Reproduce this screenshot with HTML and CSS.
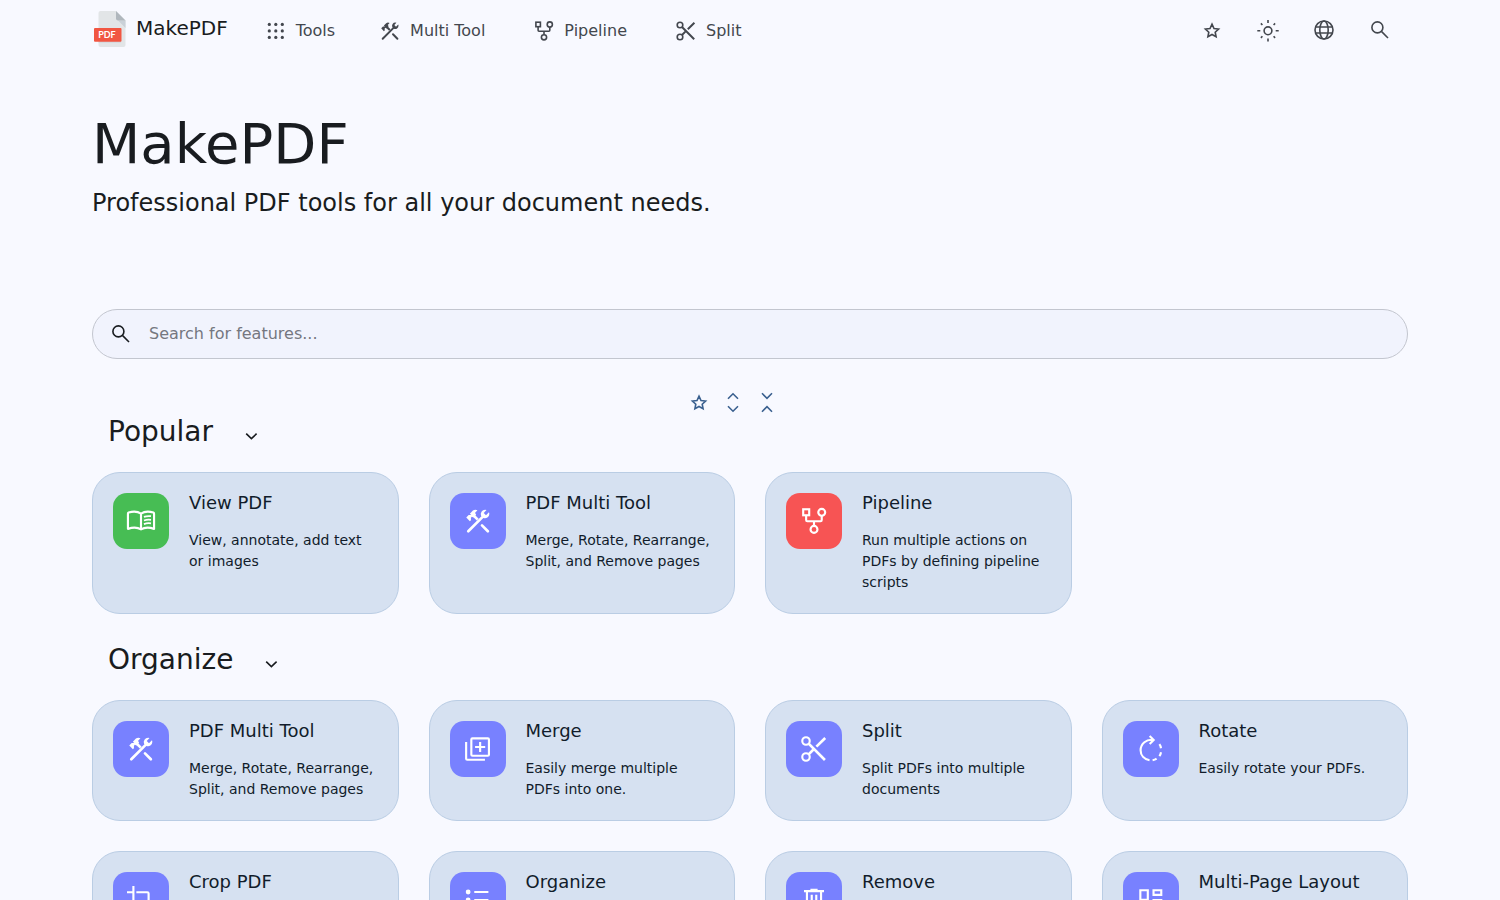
FILE: index.html
```html
<!DOCTYPE html>
<html lang="en">
<head>
<meta charset="utf-8">
<meta name="viewport" content="width=device-width, initial-scale=1">
<title>MakePDF</title>
<link rel="stylesheet" href="styles.css">
</head>
<body>
<svg class="sprite" aria-hidden="true">
  <symbol id="apps" viewBox="0 0 24 24"><g fill="currentColor"><circle cx="5.3" cy="5.4" r="1.6"/><circle cx="11.8" cy="5.4" r="1.6"/><circle cx="18.3" cy="5.4" r="1.6"/><circle cx="5.3" cy="11.9" r="1.6"/><circle cx="11.8" cy="11.9" r="1.6"/><circle cx="18.3" cy="11.9" r="1.6"/><circle cx="5.3" cy="18.4" r="1.6"/><circle cx="11.8" cy="18.4" r="1.6"/><circle cx="18.3" cy="18.4" r="1.6"/></g></symbol>
  <symbol id="tools" viewBox="0 0 24 24"><g fill="none" stroke="currentColor" stroke-width="2" stroke-linecap="round"><path d="M4.700 19.700 15.500 8.900M15 15.300l4.400 4.400"/><path stroke-linecap="butt" d="M8.500 7.700l3.300 3.300"/></g><path fill="currentColor" d="M3.200 9.300 5 7.500h1.900L5.900 6.500 8.200 4.200Q9.800 3 11.600 4L9.700 6l.9 1-.5.900L8.600 9.400 7.400 8.800 6.700 9.500v1.900l-.8.800ZM17.300 3.600q.6 0 1.100.2L16.300 6l1.700 1.700 2.200-2.200q.3.600.3 1.300a3.200 3.200 0 0 1-4.500 2.900L14.300 8A3.200 3.200 0 0 1 17.300 3.600Z"/></symbol>
  <symbol id="pipeline" viewBox="0 0 24 24"><g fill="none" stroke="currentColor" stroke-width="1.6"><rect x="3.9" y="3.2" width="4.5" height="4.5"/><circle cx="17.8" cy="5.5" r="2.6"/><circle cx="12" cy="18.3" r="2.6"/><path d="M6.1 7.9v3.4q0 .9.9.9h9.900q.9 0 .9-.9V8.200M12 12.200v3.400"/></g></symbol>
  <symbol id="cut" viewBox="0 0 24 24"><g fill="none" stroke="currentColor" stroke-width="1.6"><circle cx="6" cy="6" r="2.8"/><circle cx="6" cy="18" r="2.8"/><path stroke-width="2" d="M8 8l12.200 12.200M8 16l3.600-3.600M13.800 10.200 20.400 3.800"/></g></symbol>
  <symbol id="star" viewBox="0 0 24 24"><path fill="none" stroke="currentColor" stroke-width="1.6" d="m12 6.200 2 4.300 4.600.5-3.400 3.200.9 4.600-4.100-2.300-4.100 2.300.9-4.600L5.400 11l4.600-.5Z"/></symbol>
  <symbol id="sun" viewBox="0 0 24 24"><g fill="none" stroke="currentColor" stroke-width="1.600"><circle cx="12" cy="12.800" r="3.900"/><path d="M12 2.100v3M12 20.500v3M1.300 12.800h3M19.700 12.800h3M4.900 5.400l1.500 1.600M17.600 18.300l1.500 1.600M19.100 5.400l-1.500 1.600M6.400 18.300l-1.500 1.600"/></g></symbol>
  <symbol id="globe" viewBox="0 0 24 24"><g fill="none" stroke="currentColor" stroke-width="1.600"><circle cx="12" cy="12" r="9"/><ellipse cx="12" cy="12" rx="4.200" ry="9"/><path d="M3.600 9h16.800M3.600 15h16.800"/></g></symbol>
  <symbol id="search" viewBox="0 0 24 24"><g fill="none" stroke="currentColor" stroke-width="1.600"><circle cx="9.400" cy="9.400" r="5.500"/><path d="m13.400 13.400 6.600 6.600"/></g></symbol>
  <symbol id="chevron" viewBox="0 0 24 24"><path fill="none" stroke="currentColor" stroke-width="1.600" d="m7.200 9.700 5.200 5 5.200-5"/></symbol>
  <symbol id="expand" viewBox="0 0 24 24"><path fill="none" stroke="currentColor" stroke-width="1.600" d="m7 8.800 5-5 5 5M7 16.200l5 5 5-5"/></symbol>
  <symbol id="collapse" viewBox="0 0 24 24"><path fill="none" stroke="currentColor" stroke-width="1.600" d="m7 3.300 5 5 5-5M7 21.700l5-5 5 5"/></symbol>
  <symbol id="book" viewBox="0 0 24 24"><g fill="none" stroke="currentColor" stroke-width="1.600" stroke-linejoin="round"><path d="M12 6.500C9.500 4.800 5.500 4.800 2.700 5.700Q2.200 5.900 2.200 6.500V17.900C5.500 16.800 9.500 16.800 12 18.300C14.500 16.800 18.500 16.800 21.800 17.900V6.500Q21.800 5.900 21.300 5.700C18.500 4.800 14.500 4.800 12 6.500V18"/><path stroke-width="1.300" d="M14.200 8.900q2.500-.9 5.300-.5M14.200 11.600q2.500-.9 5.300-.5M14.200 14.300q2.500-.9 5.300-.5"/></g></symbol>
  <symbol id="merge" viewBox="0 0 24 24"><g fill="none" stroke="currentColor" stroke-width="1.600" stroke-linejoin="round"><rect x="7" y="4" width="13.200" height="13.100" rx=".8"/><path d="M3.100 6.700v12.600q0 .8.800.8H17.200M13.600 6.700v7.600M9.800 10.500h7.600"/></g></symbol>
  <symbol id="rotate" viewBox="0 0 24 24"><g fill="none" stroke="currentColor" stroke-width="1.600"><path d="M14 5.200C8.500 4.300 4.200 8.200 4.200 12.900c0 3.900 2.700 6.700 6.700 7.500M11 2.200l3 3-3 3M18.300 8.400q.9 1.200 1.200 3M19.500 14.400q-.3 1.800-1.200 3M16.200 19.200q-1.300.9-3 1.200"/></g></symbol>
  <symbol id="crop" viewBox="0 0 24 24"><path fill="none" stroke="currentColor" stroke-width="1.600" d="M1.500 6.200h4M6.300 1.500v15.300q0 1 1 1h15.200M8.500 6.200h8.200q1 0 1 1v8.500M17.700 18.500v4"/></symbol>
  <symbol id="list" viewBox="0 0 24 24"><g fill="currentColor"><circle cx="4.600" cy="6" r="1.800"/><circle cx="4.600" cy="12" r="1.800"/><circle cx="4.600" cy="18" r="1.800"/></g><path fill="none" stroke="currentColor" stroke-width="1.600" d="M9.200 6h10.600M9.200 12h10.600M9.200 18h10.600"/></symbol>
  <symbol id="trash" viewBox="0 0 24 24"><path fill="none" stroke="currentColor" stroke-width="1.600" d="M4.500 5.300h15M9.300 4.400h5.400M6.700 5.300v13.500q0 1 1 1h8.600q1 0 1-1V5.300M10.300 8v9M13.700 8v9"/></symbol>
  <symbol id="layout" viewBox="0 0 24 24"><path fill="none" stroke="currentColor" stroke-width="1.600" d="M4 4.700h5.600v7.200H4ZM13.900 4.700h5.800v3.500h-5.800ZM13.900 12.100h5.800v7.200h-5.800ZM4 15.800h5.600v3.500H4Z"/></symbol>
</svg>

<header class="topbar container">
  <a class="brand" href="#">
    <svg class="brand-logo" viewBox="0 0 36 36" aria-hidden="true">
      <path fill="#e2e5e7" d="M8.500 0H24l9.500 9.500V34q0 2-2 2H8.500q-2 0-2-2V2q0-2 2-2Z"/>
      <path fill="#cad1d8" d="M26 9.500h7.500V17Z"/>
      <path fill="#b0b7bd" d="M24 0l9.500 9.500H26q-2 0-2-2Z"/>
      <path fill="#cad1d8" d="M6.500 30.500h22.500v1H6.500Z"/>
      <rect x="2" y="17" width="27.500" height="13.800" rx="1" fill="#f15642"/>
      <text x="6.200" y="27.400" class="brand-tag">PDF</text>
    </svg>
    <span class="brand-name">MakePDF</span>
  </a>
  <nav class="nav">
    <a class="nav-link" href="#"><svg class="icon"><use href="#apps"/></svg>Tools</a>
    <div class="nav-group">
      <a class="nav-link" href="#"><svg class="icon"><use href="#tools"/></svg>Multi Tool</a>
      <a class="nav-link" href="#"><svg class="icon"><use href="#pipeline"/></svg>Pipeline</a>
      <a class="nav-link" href="#"><svg class="icon"><use href="#cut"/></svg>Split</a>
    </div>
  </nav>
  <div class="actions">
    <button class="action" type="button" aria-label="Favorites"><svg class="icon"><use href="#star"/></svg></button>
    <button class="action" type="button" aria-label="Theme"><svg class="icon"><use href="#sun"/></svg></button>
    <button class="action" type="button" aria-label="Language"><svg class="icon"><use href="#globe"/></svg></button>
    <button class="action" type="button" aria-label="Search"><svg class="icon"><use href="#search"/></svg></button>
  </div>
</header>

<main class="container">
  <div class="hero">
    <h1 class="hero-title">MakePDF</h1>
    <p class="hero-text">Professional PDF tools for all your document needs.</p>
  </div>

  <label class="searchbar">
    <svg class="icon"><use href="#search"/></svg>
    <input class="search-input" type="text" aria-label="Search for features" placeholder="Search for features...">
  </label>

  <div class="toolbar">
    <button class="tool" type="button" aria-label="Edit favorites"><svg class="icon"><use href="#star"/></svg></button>
    <button class="tool" type="button" aria-label="Expand all"><svg class="icon"><use href="#expand"/></svg></button>
    <button class="tool" type="button" aria-label="Collapse all"><svg class="icon"><use href="#collapse"/></svg></button>
  </div>

  <section class="group">
    <h2><button class="group-toggle" type="button">Popular<svg class="icon"><use href="#chevron"/></svg></button></h2>
    <div class="cards">
      <a class="card" href="#"><span class="badge green"><svg><use href="#book"/></svg></span><span class="card-body"><span class="card-title">View PDF</span><span class="card-text">View, annotate, add text or images</span></span></a>
      <a class="card" href="#"><span class="badge"><svg><use href="#tools"/></svg></span><span class="card-body"><span class="card-title">PDF Multi Tool</span><span class="card-text">Merge, Rotate, Rearrange, Split, and Remove pages</span></span></a>
      <a class="card" href="#"><span class="badge red"><svg><use href="#pipeline"/></svg></span><span class="card-body"><span class="card-title">Pipeline</span><span class="card-text">Run multiple actions on PDFs by defining pipeline scripts</span></span></a>
    </div>
  </section>

  <section class="group">
    <h2><button class="group-toggle" type="button">Organize<svg class="icon"><use href="#chevron"/></svg></button></h2>
    <div class="cards">
      <a class="card" href="#"><span class="badge"><svg><use href="#tools"/></svg></span><span class="card-body"><span class="card-title">PDF Multi Tool</span><span class="card-text">Merge, Rotate, Rearrange, Split, and Remove pages</span></span></a>
      <a class="card" href="#"><span class="badge"><svg><use href="#merge"/></svg></span><span class="card-body"><span class="card-title">Merge</span><span class="card-text">Easily merge multiple PDFs into one.</span></span></a>
      <a class="card" href="#"><span class="badge"><svg><use href="#cut"/></svg></span><span class="card-body"><span class="card-title">Split</span><span class="card-text">Split PDFs into multiple documents</span></span></a>
      <a class="card" href="#"><span class="badge"><svg><use href="#rotate"/></svg></span><span class="card-body"><span class="card-title">Rotate</span><span class="card-text">Easily rotate your PDFs.</span></span></a>
      <a class="card" href="#"><span class="badge"><svg><use href="#crop"/></svg></span><span class="card-body"><span class="card-title">Crop PDF</span></span></a>
      <a class="card" href="#"><span class="badge"><svg><use href="#list"/></svg></span><span class="card-body"><span class="card-title">Organize</span></span></a>
      <a class="card" href="#"><span class="badge"><svg><use href="#trash"/></svg></span><span class="card-body"><span class="card-title">Remove</span></span></a>
      <a class="card" href="#"><span class="badge"><svg><use href="#layout"/></svg></span><span class="card-body"><span class="card-title">Multi-Page Layout</span></span></a>
    </div>
  </section>
</main>
</body>
</html>
```
FILE: styles.css
```css
* { box-sizing: border-box; }

body {
  margin: 0;
  background: #f8f9ff;
  color: #191c20;
  font: 16px/24px "DejaVu Sans", sans-serif;
}

a { color: inherit; text-decoration: none; }
button { border: 0; padding: 0; background: none; color: inherit; font: inherit; cursor: pointer; }
h1, h2, p { margin: 0; font-weight: 400; }

.sprite { position: absolute; width: 0; height: 0; }
.icon { display: block; flex: none; width: 24px; height: 24px; }

.container { width: calc(100% - 32px); max-width: 1316px; margin: 0 auto; }

.topbar { display: flex; align-items: center; height: 60px; }
.brand { display: flex; align-items: center; gap: 8px; font-size: 20px; padding-bottom: 2px; }
.brand-logo { width: 36px; height: 36px; }
.brand-name { padding-bottom: 2px; }
.brand-tag { fill: #fff; font: bold 9px Lato, sans-serif; }
.nav { display: flex; gap: 43px; margin-left: 36px; padding-top: 1px; color: #43474e; }
.nav-group { display: flex; gap: 47px; }
.nav-link { display: flex; align-items: center; gap: 8px; white-space: nowrap; }
.actions { display: flex; margin-left: auto; color: #43474e; }
.action { padding: 16px; }

.hero { padding: 52px 0 88px; }
.hero-title { font-size: 56px; line-height: 64px; }
.hero-text { margin-top: 9px; font-size: 24px; line-height: 36px; }

.searchbar {
  display: flex;
  align-items: center;
  gap: 16px;
  height: 50px;
  padding: 0 16px;
  border: 1px solid #c3c6cf;
  border-radius: 25px;
  background: #f1f3fd;
}
.search-input { flex: 1; min-width: 0; padding: 0; border: 0; outline: 0; background: none; color: inherit; font: inherit; }
.search-input::placeholder { color: #757780; opacity: 1; }

.toolbar { display: flex; justify-content: center; margin-top: 31px; padding-right: 34px; color: #3a608f; }
.tool { padding: 0 5px; }

.group { padding-top: 1px; }
.group + .group { margin-top: 28px; }
.group-toggle { display: flex; align-items: center; gap: 26px; padding-left: 16px; font-size: 28px; line-height: 34px; }
.group-toggle .icon { margin-top: 8px; }

.cards { display: grid; grid-template-columns: repeat(auto-fill, minmax(290px, 1fr)); gap: 30px; margin-top: 23px; }
.card {
  display: flex;
  gap: 20px;
  min-height: 121px;
  padding: 20px;
  border: 1px solid #bacde4;
  border-radius: 28px;
  background: #d6e1f1;
  color: #111c2b;
}
.badge { display: grid; place-items: center; flex: none; width: 56px; height: 56px; border-radius: 14px; background: #7881ff; color: #fff; }
.badge svg { width: 32px; height: 32px; }
.badge.green { background: #47bd54; }
.badge.red { background: #f75454; }
.card-body { display: flex; flex-direction: column; gap: 18px; min-width: 0; }
.card-title { font-size: 18px; line-height: 19px; }
.card-text { font-size: 14px; line-height: 21px; }
```
